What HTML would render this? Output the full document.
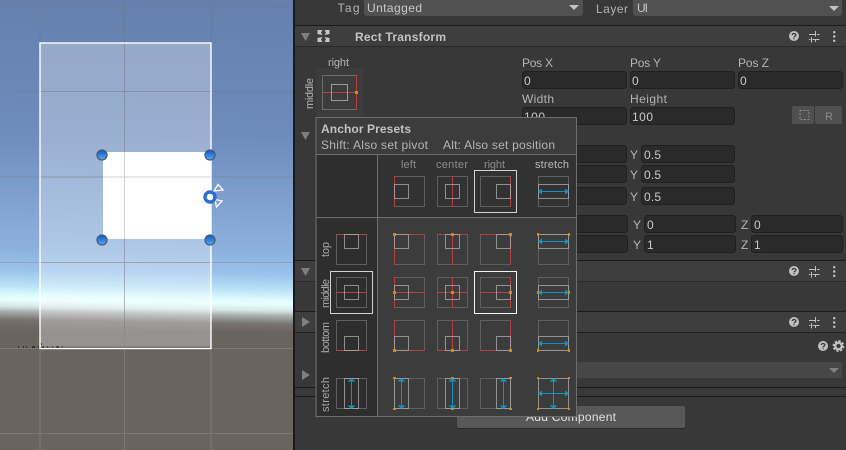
<!DOCTYPE html>
<html><head><meta charset="utf-8"><style>
html,body{margin:0;padding:0;background:#383838;width:846px;height:450px;overflow:hidden}
svg{display:block}
text{font-family:"Liberation Sans",sans-serif;font-size:12px;fill:#b4b4b4}
.b{font-weight:bold;fill:#c2c2c2}
.v{fill:#c8c8c8}
.f{fill:#2a2a2a;stroke:#202020}
.d{fill:#515151}
.ln{stroke:#1b1b1b;stroke-width:1;fill:none}
.hd{fill:#3e3e3e}
.c text{fill:#8b8b8b}
.o{fill:none;stroke:#5f5f5f;stroke-width:1}
.i{fill:none;stroke:rgba(175,175,175,.75);stroke-width:1}
.r{fill:none;stroke:#b44044;stroke-width:1}
.y{fill:#c8920e}
.bl{fill:none;stroke:#0f94c8;stroke-width:1}
.blf{fill:#0f94c8}
.sel{fill:none;stroke:#d2d2d2;stroke-width:1}
</style></head><body>
<svg width="846" height="450" viewBox="0 0 846 450" xmlns="http://www.w3.org/2000/svg">
<defs>
<linearGradient id="sky" gradientUnits="userSpaceOnUse" x1="146" y1="0" x2="140.4" y2="330">
<stop offset="0" stop-color="#6580ac"/>
<stop offset=".40" stop-color="#6d8bbc"/>
<stop offset=".76" stop-color="#8db1de"/>
<stop offset=".825" stop-color="#9cc2ea"/>
<stop offset=".87" stop-color="#b8e0f6"/>
<stop offset=".90" stop-color="#dcfbfd"/>
<stop offset=".915" stop-color="#e8ffff"/>
<stop offset=".935" stop-color="#d5e6e5"/>
<stop offset=".95" stop-color="#a9b0af"/>
<stop offset=".975" stop-color="#777370"/>
<stop offset="1" stop-color="#6c6662"/>
</linearGradient>
<linearGradient id="ball" x1="0" y1="0" x2="0" y2="1">
<stop offset="0" stop-color="#1a50b0"/><stop offset=".45" stop-color="#2d7ce0"/><stop offset="1" stop-color="#5aa8f0"/>
</linearGradient>
<rect id="o" class="o" x=".5" y=".5" width="30" height="30"/>
<g id="ah"><path class="bl" d="M1 7.500H30"/><path class="blf" d="M0 7.500L4 4.500V10.500ZM31 7.500L27 4.500V10.500Z"/></g>
<g id="av"><path class="bl" d="M7.500 1V30"/><path class="blf" d="M7.500 0L3.500 3.500H11.500ZM7.500 31L3.500 27.500H11.500Z"/></g>
<g id="hp"><circle cx="5" cy="5" r="5" fill="#c0c0c0"/><path d="M3.200 4C3.200 2 6.900 2 6.900 4C6.900 5.200 5 5.200 5 6.400M5 7.200V8.300" fill="none" stroke="#3a3a3a" stroke-width="1.300"/></g>
<g id="sl"><path d="M0 3.500H6M8 3.500H10.500M0 8.500H1.500M3.500 8.500H10.500M6.500 0V5.500M2.500 6V11.500M6.500 8.500V11" fill="none" stroke="#c0c0c0" stroke-width="1"/></g>
<g id="dt"><rect x="0" y="0" width="2.400" height="2.400" rx="1" fill="#c0c0c0"/><rect x="0" y="4.300" width="2.400" height="2.400" rx="1" fill="#c0c0c0"/><rect x="0" y="8.600" width="2.400" height="2.400" rx="1" fill="#c0c0c0"/></g>
<circle id="h" r="5" fill="url(#ball)" stroke="#4b5c73" stroke-width="1.300"/>
</defs>

<!-- SCENE -->
<rect x="0" y="0" width="293" height="450" fill="#6a645f"/>
<rect x="0" y="0" width="293" height="331" fill="url(#sky)"/>
<path d="M40 0V316M124.500 0V316M211 0V316M0 6.500H293M0 91.500H293M0 177H293M0 262.500H293" stroke="rgba(110,110,110,.28)" stroke-width="1"/>
<path d="M40 330V450M124.500 330V450M211 330V450M0 348.500H293M0 433.500H293" stroke="rgba(170,170,170,.3)" stroke-width="1"/>
<rect x="40" y="43" width="171" height="305.500" fill="#fff" fill-opacity=".3"/>
<path d="M40.500 347.300H210" stroke="#54504e" stroke-width="1.200"/>
<path d="M124.500 43V348M40 91.500H211M40 177H211M40 262.500H211" stroke="rgba(90,90,90,.28)" stroke-width="1"/>
<rect x="103" y="152" width="108" height="87" fill="#fff"/>
<path d="M124.500 152V239M103 177H211" stroke="#d2d2d2" stroke-width="1"/>
<rect x="40" y="43" width="171" height="305.500" fill="none" stroke="#fff" stroke-width="1.400"/>
<path d="M18 347H19M23 347H24M26 347H27M32 347H35M38 347H39M41 344H42M42 347H44M47 347H48M52 347H53M56 347H59M62 347H63" stroke="#15180f" stroke-width="1.200"/>
<use href="#h" x="102" y="155"/>
<use href="#h" x="210" y="155"/>
<use href="#h" x="102" y="240"/>
<use href="#h" x="210" y="240"/>
<path d="M205 187L203 189.500M201.500 191L204 192.500M200 197H203M201 203L204 201.500M205 207L203 204.500" stroke="#e4e8ee" stroke-width=".8" fill="none"/>
<path d="M214 191L218 184.500L223 190ZM215 199.500L222 201L216.500 207Z" fill="none" stroke="#fff" stroke-width="1.300"/>
<circle cx="210" cy="197" r="5" fill="#fff" stroke="#2a6fd0" stroke-width="3.400"/>

<!-- DIVIDER -->
<rect x="293" y="0" width="2" height="450" fill="#1a1a1a"/>
<rect x="295" y="0" width="551" height="450" fill="#383838"/>

<!-- TOP ROW -->
<text x="337.500" y="12" textLength="22">Tag</text>
<rect x="364" y="-3" width="219" height="19" rx="3" class="d"/>
<text class="v" x="367" y="12" textLength="55">Untagged</text>
<path d="M569 5H579L574 10Z" fill="#c4c4c4"/>
<text x="596" y="13" textLength="32">Layer</text>
<rect x="633" y="-3" width="209" height="19" rx="3" class="d"/>
<text class="v" x="637" y="12" textLength="11">UI</text>
<path d="M829 6H839L834 11Z" fill="#c4c4c4"/>

<!-- RECT TRANSFORM HEADER -->
<path class="ln" d="M295 25.500H846"/>
<rect x="295" y="26" width="551" height="20" class="hd"/>
<path d="M295 46.500H846" stroke="#2a2a2a"/>
<path d="M301 33H310L305.500 41Z" fill="#7f7f7f"/>
<path d="M317.500 30H322.500L321 32.500L322.500 35L317.500 34ZM329.500 30H324.500L326 32.500L324.500 35L329.500 34ZM317.500 42H322.500L321 39.500L322.500 37L317.500 38ZM329.500 42H324.500L326 39.500L324.500 37L329.500 38Z" fill="#c6c6c6"/>
<text class="b" x="355" y="41" textLength="91">Rect Transform</text>
<use href="#hp" x="789" y="31"/>
<use href="#sl" x="809" y="31"/>
<use href="#dt" x="833" y="31"/>

<!-- ANCHOR WIDGET -->
<rect x="316" y="68" width="47" height="49" fill="#3c3c3c"/>
<text x="328" y="66" textLength="21" style="font-size:11px">right</text>
<text transform="translate(313,109) rotate(-90)" textLength="31" style="font-size:11px" x="0" y="0">middle</text>
<rect x="322.500" y="75.500" width="34" height="34" fill="none" stroke="#6a6a6a"/>
<path d="M323 92.500H356M356.500 75V110" stroke="#b74044" fill="none"/>
<rect x="331.500" y="84.500" width="16" height="16" fill="none" stroke="#9a9a9a"/>
<rect x="355" y="91" width="3" height="3" fill="#c8920e"/>

<!-- POSITION FIELDS -->
<text x="522" y="67" textLength="31">Pos X</text>
<text x="630" y="67" textLength="31">Pos Y</text>
<text x="738" y="67" textLength="31">Pos Z</text>
<rect class="f" x="522.500" y="71.500" width="104" height="17" rx="3"/>
<rect class="f" x="630.500" y="71.500" width="104" height="17" rx="3"/>
<rect class="f" x="738.500" y="71.500" width="104" height="17" rx="3"/>
<text class="v" x="524" y="85">0</text>
<text class="v" x="632" y="85">0</text>
<text class="v" x="740" y="85">0</text>
<text x="522" y="103" textLength="32">Width</text>
<text x="630" y="103" textLength="37">Height</text>
<rect class="f" x="522.500" y="107.500" width="104" height="17" rx="3"/>
<rect class="f" x="630.500" y="107.500" width="104" height="17" rx="3"/>
<text class="v" x="524" y="121" textLength="21">100</text>
<text class="v" x="632" y="121" textLength="21">100</text>
<rect x="792" y="106" width="22" height="18" rx="2" fill="#505050"/>
<rect x="815" y="106" width="27" height="18" rx="2" fill="#505050"/>
<rect x="800" y="110.500" width="9" height="9" fill="none" stroke="#8a8a8a" stroke-dasharray="2 1.500"/>
<text x="825" y="120" style="fill:#8a8a8a;font-size:11px">R</text>

<path d="M301 132H310L305.500 140Z" fill="#7f7f7f"/>

<!-- LOWER FIELDS -->
<rect class="f" x="560.500" y="145.500" width="66" height="17" rx="3"/>
<rect class="f" x="560.500" y="165.500" width="66" height="17" rx="3"/>
<rect class="f" x="560.500" y="187.500" width="66" height="17" rx="3"/>
<text x="630" y="159">Y</text><text x="630" y="179">Y</text><text x="630" y="201">Y</text>
<rect class="f" x="641.500" y="145.500" width="93" height="17" rx="3"/>
<rect class="f" x="641.500" y="165.500" width="93" height="17" rx="3"/>
<rect class="f" x="641.500" y="187.500" width="93" height="17" rx="3"/>
<text class="v" x="644" y="159" textLength="17">0.5</text>
<text class="v" x="644" y="179" textLength="17">0.5</text>
<text class="v" x="644" y="201" textLength="17">0.5</text>
<rect class="f" x="560.500" y="215.500" width="67" height="17" rx="3"/>
<rect class="f" x="560.500" y="235.500" width="67" height="17" rx="3"/>
<text x="633" y="229">Y</text><text x="633" y="249">Y</text>
<rect class="f" x="644.500" y="215.500" width="91" height="17" rx="3"/>
<rect class="f" x="644.500" y="235.500" width="91" height="17" rx="3"/>
<text class="v" x="647" y="229">0</text><text class="v" x="647" y="249">1</text>
<text x="741" y="229">Z</text><text x="741" y="249">Z</text>
<rect class="f" x="751.500" y="215.500" width="91" height="17" rx="3"/>
<rect class="f" x="751.500" y="235.500" width="91" height="17" rx="3"/>
<text class="v" x="754" y="229">0</text><text class="v" x="754" y="249">1</text>

<!-- COMPONENT HEADERS -->
<path class="ln" d="M295 260.500H846"/>
<rect x="295" y="261" width="551" height="20" class="hd"/>
<path d="M295 281.500H846" stroke="#2c2c2c"/>
<path d="M301 268H310L305.500 276Z" fill="#7f7f7f"/>
<use href="#hp" x="789" y="266"/><use href="#sl" x="809" y="266"/><use href="#dt" x="833" y="266"/>
<path class="ln" d="M295 311.500H846"/>
<rect x="295" y="312" width="551" height="20" class="hd"/>
<path d="M295 332.500H846" stroke="#1f1f1f"/>
<path d="M302 317V327L310 322Z" fill="#7f7f7f"/>
<use href="#hp" x="789" y="317"/><use href="#sl" x="809" y="317"/><use href="#dt" x="833" y="317"/>
<use href="#hp" x="818" y="341"/>
<circle cx="838.500" cy="346" r="3.300" fill="none" stroke="#c0c0c0" stroke-width="2.400"/>
<circle cx="838.500" cy="346" r="5" fill="none" stroke="#c0c0c0" stroke-width="1.800" stroke-dasharray="2.200 1.700"/>
<rect x="340" y="362" width="502" height="16" rx="2" fill="#474747"/>
<path d="M829 368H839L834 373Z" fill="#808080"/>
<path d="M302 370V380L310 375Z" fill="#7f7f7f"/>
<path class="ln" d="M295 387.500H846M295 396.500H846"/>
<rect x="457" y="406" width="228" height="22" rx="2" fill="#585858"/>
<path d="M458 428.500H685" stroke="#2a2a2a"/>
<text x="526" y="421" textLength="90" style="fill:#e0e0e0">Add Component</text>

<!-- POPUP -->
<rect x="316" y="117" width="261" height="299" fill="#3c3c3c"/>
<rect x="317" y="155" width="60" height="261" fill="#2e2e2e"/>
<rect x="378" y="155" width="198" height="62" fill="#323232"/>
<path d="M316 416.500V117.500H576.500V417M315.500 416.500H577M316 154.500H577M316 217.500H577M377.500 155V416" fill="none" stroke="#6e6e6e"/>
<text class="b" x="321" y="133" textLength="90">Anchor Presets</text>
<text x="321" y="149" textLength="107">Shift: Also set pivot</text>
<text x="443" y="149" textLength="112">Alt: Also set position</text>
<g class="c">
<text x="401" y="168" textLength="15" style="font-size:11px">left</text>
<text x="436" y="168" textLength="32" style="font-size:11px">center</text>
<text x="484" y="168" textLength="21" style="font-size:11px">right</text>
</g>
<text x="535" y="168" textLength="34" style="font-size:11px;fill:#b8b8b8">stretch</text>
<text transform="translate(329,257) rotate(-90)" textLength="15" style="font-size:11px;fill:#a8a8a8">top</text>
<text transform="translate(329,308) rotate(-90)" textLength="29" style="font-size:11px;fill:#a8a8a8">middle</text>
<text transform="translate(329,353) rotate(-90)" textLength="31" style="font-size:11px;fill:#a8a8a8">bottom</text>
<text transform="translate(329,412) rotate(-90)" textLength="35" style="font-size:11px;fill:#a8a8a8">stretch</text>

<!-- header row icons -->
<g transform="translate(394,176)"><use href="#o"/><path class="r" d="M.5 0V31"/><rect class="i" x=".5" y="8.500" width="14" height="14"/></g>
<g transform="translate(437,176)"><use href="#o"/><path class="r" d="M15.500 0V31"/><rect class="i" x="8.500" y="8.500" width="14" height="14"/></g>
<g transform="translate(480,176)"><use href="#o"/><path class="r" d="M30.500 0V31"/><rect class="i" x="16.500" y="8.500" width="14" height="14"/></g>
<g transform="translate(538,176)"><use href="#o"/><rect class="i" x=".5" y="8.500" width="30" height="14"/><use href="#ah" y="8"/></g>
<rect class="sel" x="474.500" y="170.500" width="42" height="42"/>

<!-- left column -->
<g transform="translate(336,234)"><use href="#o"/><path class="r" d="M0 .5H31"/><rect class="i" x="8.500" y=".5" width="14" height="14"/></g>
<g transform="translate(336,277)"><use href="#o"/><path class="r" d="M0 15.500H31"/><rect class="i" x="8.500" y="8.500" width="14" height="14"/></g>
<g transform="translate(336,320)"><use href="#o"/><path class="r" d="M0 30.500H31"/><rect class="i" x="8.500" y="16.500" width="14" height="14"/></g>
<g transform="translate(336,378)"><use href="#o"/><rect class="i" x="8.500" y=".5" width="14" height="30"/><use href="#av" x="8"/></g>
<rect class="sel" x="330.500" y="271.500" width="42" height="42"/>

<!-- row 1 -->
<g transform="translate(394,234)"><use href="#o"/><path class="r" d="M.5 0V31M0 .5H31"/><rect class="i" x=".5" y=".5" width="14" height="14"/><rect class="y" x="-1" y="-1" width="3" height="3"/></g>
<g transform="translate(437,234)"><use href="#o"/><path class="r" d="M15.500 0V31M0 .5H31"/><rect class="i" x="8.500" y=".5" width="14" height="14"/><rect class="y" x="14" y="-1" width="3" height="3"/></g>
<g transform="translate(480,234)"><use href="#o"/><path class="r" d="M30.500 0V31M0 .5H31"/><rect class="i" x="16.500" y=".5" width="14" height="14"/><rect class="y" x="29" y="-1" width="3" height="3"/></g>
<g transform="translate(538,234)"><use href="#o"/><rect class="i" x=".5" y=".5" width="30" height="14"/><use href="#ah"/><rect class="y" x="-1" y="-1" width="2" height="3"/><rect class="y" x="30" y="-1" width="2" height="3"/></g>
<!-- row 2 -->
<g transform="translate(394,277)"><use href="#o"/><path class="r" d="M.5 0V31M0 15.500H31"/><rect class="i" x=".5" y="8.500" width="14" height="14"/><rect class="y" x="-1" y="14" width="3" height="3"/></g>
<g transform="translate(437,277)"><use href="#o"/><path class="r" d="M15.500 0V31M0 15.500H31"/><rect class="i" x="8.500" y="8.500" width="14" height="14"/><rect class="y" x="14" y="14" width="3" height="3"/></g>
<g transform="translate(480,277)"><use href="#o"/><path class="r" d="M30.500 0V31M0 15.500H31"/><rect class="i" x="16.500" y="8.500" width="14" height="14"/><rect class="y" x="29" y="14" width="3" height="3"/></g>
<g transform="translate(538,277)"><use href="#o"/><rect class="i" x=".5" y="8.500" width="30" height="14"/><use href="#ah" y="8"/><rect class="y" x="-1" y="14" width="2" height="3"/><rect class="y" x="30" y="14" width="2" height="3"/></g>
<rect x="474.500" y="271.500" width="42" height="42" fill="none" stroke="#f2f2f2"/>
<!-- row 3 -->
<g transform="translate(394,320)"><use href="#o"/><path class="r" d="M.5 0V31M0 30.500H31"/><rect class="i" x=".5" y="16.500" width="14" height="14"/><rect class="y" x="-1" y="29" width="3" height="3"/></g>
<g transform="translate(437,320)"><use href="#o"/><path class="r" d="M15.500 0V31M0 30.500H31"/><rect class="i" x="8.500" y="16.500" width="14" height="14"/><rect class="y" x="14" y="29" width="3" height="3"/></g>
<g transform="translate(480,320)"><use href="#o"/><path class="r" d="M30.500 0V31M0 30.500H15"/><rect class="i" x="16.500" y="16.500" width="14" height="14"/><rect class="y" x="29" y="29" width="3" height="3"/></g>
<g transform="translate(538,320)"><use href="#o"/><rect class="i" x=".5" y="16.500" width="30" height="14"/><use href="#ah" y="16"/><rect class="y" x="-1" y="29" width="2" height="3"/><rect class="y" x="30" y="29" width="2" height="3"/></g>
<!-- row 4 -->
<g transform="translate(394,378)"><use href="#o"/><rect class="i" x=".5" y=".5" width="14" height="30"/><use href="#av"/><rect class="y" x="-1" y="-1" width="3" height="2"/><rect class="y" x="-1" y="30" width="3" height="2"/></g>
<g transform="translate(437,378)"><use href="#o"/><rect class="i" x="8.500" y=".5" width="14" height="30"/><use href="#av" x="8"/><rect class="y" x="14" y="-1" width="3" height="2"/><rect class="y" x="14" y="30" width="3" height="2"/></g>
<g transform="translate(480,378)"><use href="#o"/><rect class="i" x="16.500" y=".5" width="14" height="30"/><use href="#av" x="16"/><rect class="y" x="29" y="-1" width="3" height="2"/><rect class="y" x="29" y="30" width="3" height="2"/></g>
<g transform="translate(538,378)"><rect class="i" x=".5" y=".5" width="30" height="30"/><use href="#ah" y="8"/><use href="#av" x="8"/><rect class="y" x="-1" y="-1" width="2" height="2"/><rect class="y" x="30" y="-1" width="2" height="2"/><rect class="y" x="-1" y="30" width="2" height="2"/><rect class="y" x="30" y="30" width="2" height="2"/></g>
</svg>
</body></html>
